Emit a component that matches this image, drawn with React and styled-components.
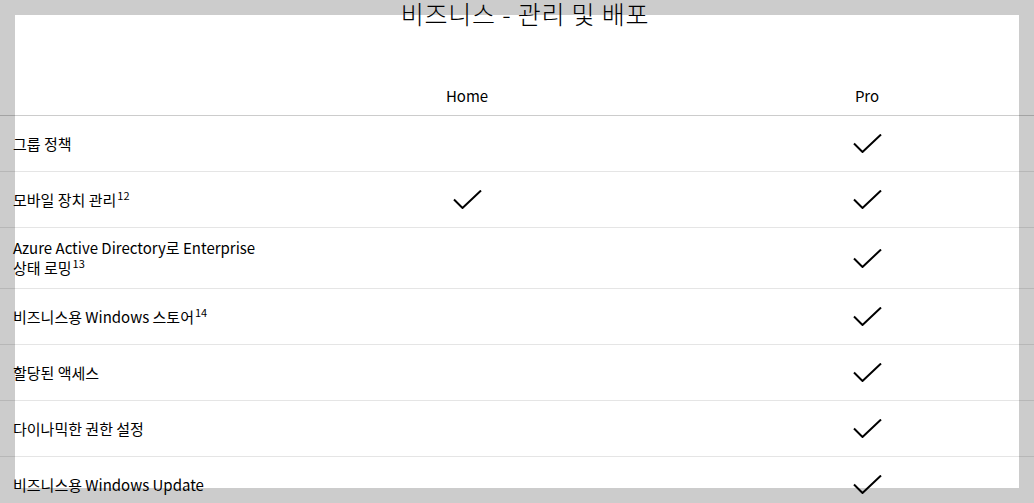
import React from "react";
import styled, { createGlobalStyle } from "styled-components";

const GlobalStyle = createGlobalStyle`
  html, body {
    margin: 0;
    padding: 0;
    background: #cccccc;
    overflow: hidden;
  }
  body {
    font-family: "Noto Sans CJK KR", "Noto Sans", sans-serif;
    color: #000;
  }
`;

const Stage = styled.div`
  position: relative;
  height: 503px;
  overflow: hidden;

  &::before {
    content: "";
    position: absolute;
    top: 15px;
    left: 15px;
    right: 15px;
    bottom: 15px;
    background: #fff;
  }
`;

const Content = styled.div`
  position: relative;
  z-index: 1;
`;

const Title = styled.h2`
  margin: -1px 0 0;
  height: 87px;
  padding-left: 16px;
  font-size: 25px;
  font-weight: 300;
  letter-spacing: 0.8px;
  line-height: 29px;
  text-align: center;
`;

const Grid = styled.div`
  display: grid;
  grid-template-columns: 254px 400px 400px;
  align-items: center;
  padding-left: 13px;
  border-bottom: 1px solid ${(p) => (p.$head ? "rgba(0,0,0,0.2)" : "rgba(0,0,0,0.1)")};
  min-height: ${(p) => (p.$head ? "20px" : "56px")};
  padding-bottom: ${(p) => (p.$head ? "9px" : "10px")};
  padding-top: ${(p) => (p.$head ? "0" : "10px")};
  box-sizing: border-box;
`;

const HeadCell = styled.div`
  font-size: 15px;
  line-height: 20px;
  text-align: center;
`;

const Label = styled.div`
  font-size: 15px;
  line-height: 20px;

  sup {
    font-size: 11px;
    line-height: 0;
    vertical-align: 6px;
    margin-left: 1px;
  }
`;

const Mark = styled.div`
  display: flex;
  justify-content: center;
  height: 20px;
  align-items: center;
`;

const Check = () => (
  <svg width="29" height="19" viewBox="0 0 29 19" fill="none">
    <path d="M1 9.5 L9.5 18 L28 0.5" stroke="#000" strokeWidth="2" />
  </svg>
);

const rows = [
  { label: "그룹 정책", home: false, pro: true },
  { label: "모바일 장치 관리", sup: "12", home: true, pro: true },
  {
    label: (
      <>
        Azure Active Directory로 Enterprise
        <br />
        상태 로밍
      </>
    ),
    sup: "13",
    home: false,
    pro: true,
  },
  { label: "비즈니스용 Windows 스토어", sup: "14", home: false, pro: true },
  { label: "할당된 액세스", home: false, pro: true },
  { label: "다이나믹한 권한 설정", home: false, pro: true },
  { label: "비즈니스용 Windows Update", home: false, pro: true },
];

export default function App() {
  return (
    <>
      <GlobalStyle />
      <Stage>
        <Content>
          <Title>비즈니스 - 관리 및 배포</Title>
          <Grid $head>
            <div />
            <HeadCell>Home</HeadCell>
            <HeadCell>Pro</HeadCell>
          </Grid>
          {rows.map((row, i) => (
            <Grid key={i}>
              <Label>
                {row.label}
                {row.sup && <sup>{row.sup}</sup>}
              </Label>
              <Mark>{row.home && <Check />}</Mark>
              <Mark>{row.pro && <Check />}</Mark>
            </Grid>
          ))}
        </Content>
      </Stage>
    </>
  );
}
